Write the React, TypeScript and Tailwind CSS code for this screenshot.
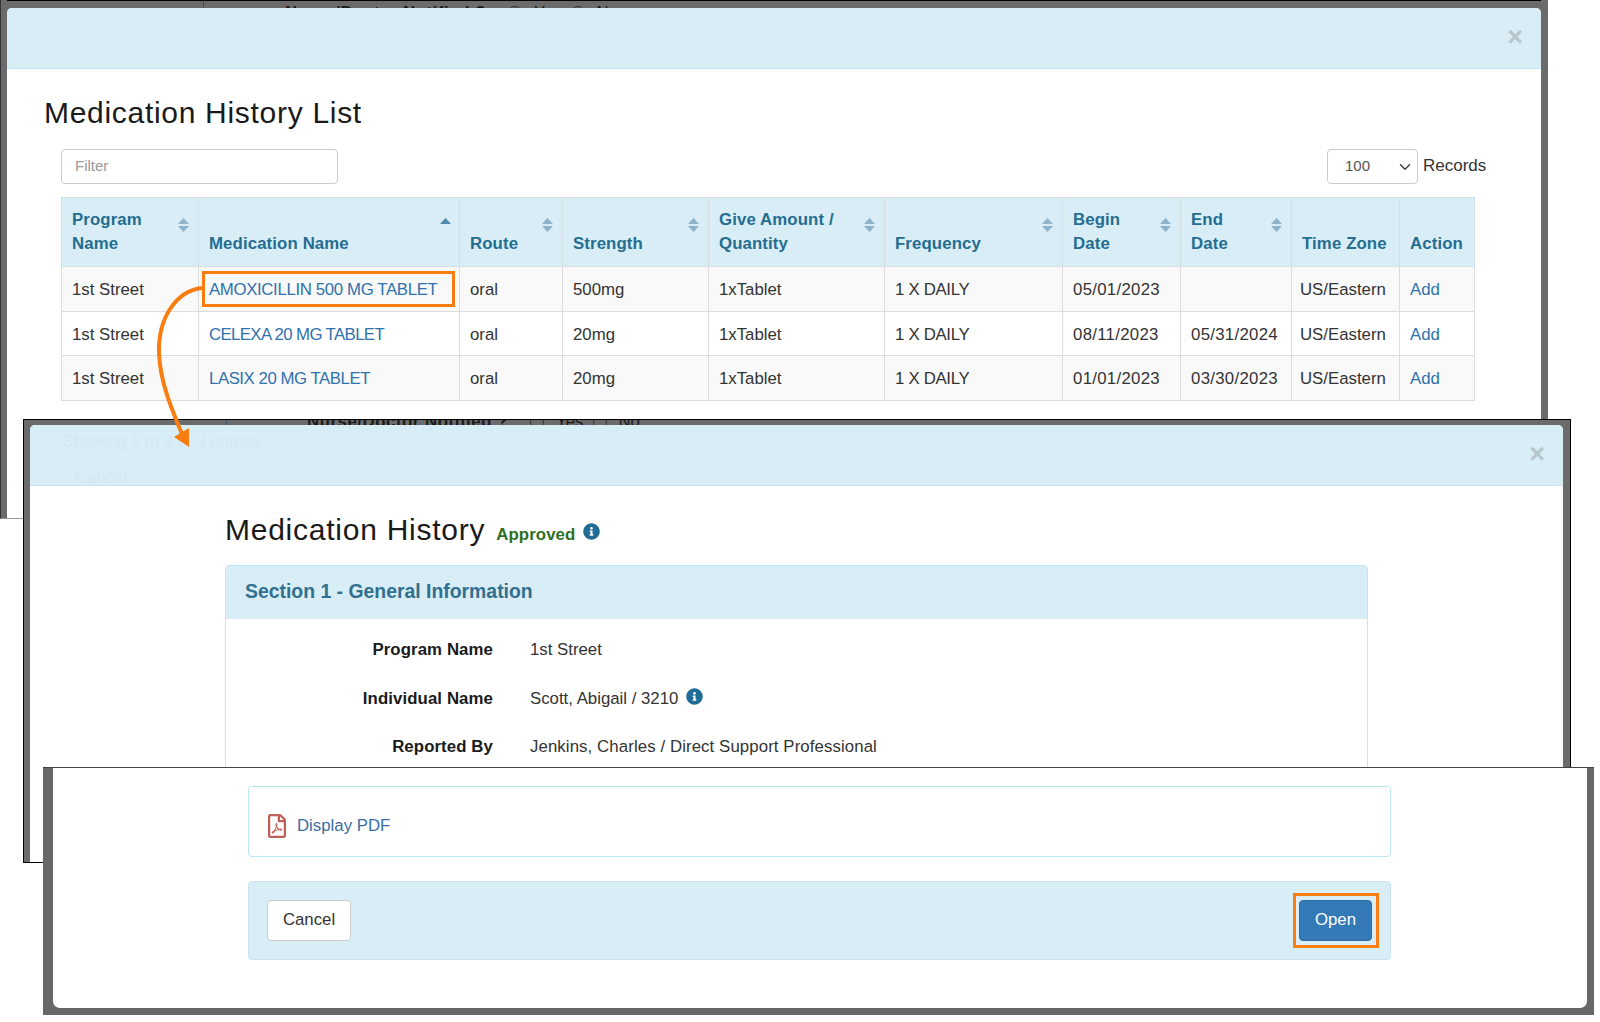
import React from 'react';
import { ChevronDown } from 'lucide-react';
import { FaInfoCircle, FaRegFilePdf } from 'react-icons/fa';

type Row = {
    program: string;
    name: string;
    nameTracking: string;
    route: string;
    strength: string;
    quantity: string;
    frequency: string;
    begin: string;
    end: string;
    zone: string;
};

const rows: Row[] = [
    { program: '1st Street', name: 'AMOXICILLIN 500 MG TABLET', nameTracking: 'tracking-[-0.35px]', route: 'oral', strength: '500mg', quantity: '1xTablet', frequency: '1 X DAILY', begin: '05/01/2023', end: '', zone: 'US/Eastern' },
    { program: '1st Street', name: 'CELEXA 20 MG TABLET', nameTracking: 'tracking-[-0.62px]', route: 'oral', strength: '20mg', quantity: '1xTablet', frequency: '1 X DAILY', begin: '08/11/2023', end: '05/31/2024', zone: 'US/Eastern' },
    { program: '1st Street', name: 'LASIX 20 MG TABLET', nameTracking: 'tracking-[-0.45px]', route: 'oral', strength: '20mg', quantity: '1xTablet', frequency: '1 X DAILY', begin: '01/01/2023', end: '03/30/2023', zone: 'US/Eastern' },
];

const columns: { label: string[]; width: string; sort: 'both' | 'up' | 'none' }[] = [
    { label: ['Program', 'Name'], width: 'w-[137px]', sort: 'both' },
    { label: ['Medication Name'], width: 'w-[261px]', sort: 'up' },
    { label: ['Route'], width: 'w-[103px]', sort: 'both' },
    { label: ['Strength'], width: 'w-[146px]', sort: 'both' },
    { label: ['Give Amount /', 'Quantity'], width: 'w-[176px]', sort: 'both' },
    { label: ['Frequency'], width: 'w-[178px]', sort: 'both' },
    { label: ['Begin', 'Date'], width: 'w-[118px]', sort: 'both' },
    { label: ['End', 'Date'], width: 'w-[111px]', sort: 'both' },
    { label: ['Time Zone'], width: 'w-[108px]', sort: 'none' },
    { label: ['Action'], width: 'w-[75px]', sort: 'none' },
];

const SortIcon: React.FC<{ kind: 'both' | 'up' }> = ({ kind }) =>
    kind === 'both' ? (
        <svg className="absolute right-[9px] top-[20px]" width="11" height="14" viewBox="0 0 11 14">
            <path d="M0 6 L5.5 0 L11 6 Z M0 8 L11 8 L5.5 14 Z" fill="#8fb4c9" />
        </svg>
    ) : (
        <svg className="absolute right-[8px] top-[20px]" width="11" height="6" viewBox="0 0 11 6">
            <path d="M0 6 L5.5 0 L11 6 Z" fill="#4f8cab" />
        </svg>
    );

const CloseButton: React.FC = () => (
    <span className="mb-[2px] text-[27px] font-bold leading-none text-[#b7c5cc]">×</span>
);

// the form behind a window, only a sliver of it shows above the modal
const BehindForm: React.FC = () => (
    <div className="flex items-center whitespace-nowrap font-bold leading-[24px] tracking-[0.55px] text-[#1a1a1a]">
        <span>Nurse/Doctor Notified ?</span>
        <span className="ml-[22px] inline-block h-[14px] w-[14px] rounded-full border border-[#333]" />
        <span className="ml-[12px] font-normal tracking-normal">Yes</span>
        <span className="ml-[10px] inline-block h-[14px] w-[14px] rounded-full border border-[#333]" />
        <span className="ml-[11px] font-normal tracking-normal">No</span>
    </div>
);

const Cell: React.FC<{ children?: React.ReactNode; className?: string }> = ({ children, className = '' }) => (
    <td className={`relative border border-[#ddd] pl-[10px] pt-[2px] align-middle ${className}`}>{children}</td>
);

export default function App() {
    return (
        <div className="relative h-[1022px] w-[1600px] overflow-hidden bg-white font-['Liberation_Sans',Arial,sans-serif] text-[16.8px] text-[#333]">
            {/* list window */}
            <div className="absolute left-0 top-0 flex h-[519px] w-[1548px] flex-col border-b border-l border-[#999] border-l-[#333] bg-[#6b6b6b] pl-[6px] pr-[7px]">
                <div className="relative h-[8px] overflow-hidden border-t border-black pl-[278px]">
                    <BehindForm />
                    <span className="absolute bottom-0 left-[196px] top-0 w-px bg-[#3f5563]" />
                </div>
                <div className="flex-1 rounded-t-[5px] bg-white">
                    <div className="flex h-[61px] items-center justify-end rounded-t-[5px] border-b border-[#bce8f1] bg-[#d9edf7] pr-[18px]">
                        <CloseButton />
                    </div>
                    <h1 className="ml-[37px] mt-[27px] text-[30px] leading-[33px] tracking-[0.7px] text-[#1a1a1a]">Medication History List</h1>
                    <div className="ml-[54px] mt-[20px] flex h-[35px] w-[1425px] items-center">
                        <input
                            placeholder="Filter"
                            className="h-[35px] w-[277px] rounded-[4px] border border-[#ccc] bg-white pb-[2px] pl-[13px] text-[15px] outline-none placeholder:text-[#999]"
                        />
                        <div className="ml-auto flex h-[35px] w-[91px] items-center justify-between rounded-[4px] border border-[#ccc] pl-[17px] pr-[3px] text-[15px] text-[#555]">
                            100
                            <ChevronDown size={18} strokeWidth={2} className="text-[#444]" />
                        </div>
                        <span className="mb-[2px] ml-[5px] w-[63px] text-[17px]">Records</span>
                    </div>
                    <table className="ml-[54px] mt-[13px] w-[1413px] table-fixed border-collapse">
                        <colgroup>
                            {columns.map((c) => (
                                <col key={c.label.join(' ')} className={c.width} />
                            ))}
                        </colgroup>
                        <thead>
                            <tr className="h-[69px] bg-[#d9edf7]">
                                {columns.map((c) => (
                                    <th
                                        key={c.label.join(' ')}
                                        className="relative border border-[#d5dfe4] pb-[10px] pl-[10px] text-left align-bottom font-bold leading-[24px] tracking-[0.12px] text-[#246d90]"
                                    >
                                        {c.label.map((line) => (
                                            <div key={line}>{line}</div>
                                        ))}
                                        {c.sort !== 'none' && <SortIcon kind={c.sort} />}
                                    </th>
                                ))}
                            </tr>
                        </thead>
                        <tbody>
                            {rows.map((r, i) => (
                                <tr key={r.name} className={i === 1 ? 'h-[44px] bg-white' : 'h-[45px] bg-[#f9f9f9]'}>
                                    <Cell>{r.program}</Cell>
                                    <Cell className="text-[#2f72ad]">
                                        <span className={r.nameTracking}>{r.name}</span>
                                        {i === 0 && <span className="absolute bottom-[4px] left-[3px] right-[4px] top-[4px] border-[3px] border-[#f97d10]" />}
                                    </Cell>
                                    <Cell>{r.route}</Cell>
                                    <Cell>{r.strength}</Cell>
                                    <Cell>{r.quantity}</Cell>
                                    <Cell className="tracking-[-0.3px]">{r.frequency}</Cell>
                                    <Cell className="tracking-[0.3px]">{r.begin}</Cell>
                                    <Cell className="tracking-[0.3px]">{r.end}</Cell>
                                    <Cell>
                                        <span className="-ml-[2px] block">{r.zone}</span>
                                    </Cell>
                                    <Cell className="text-[#2f72ad]">Add</Cell>
                                </tr>
                            ))}
                        </tbody>
                    </table>
                </div>
            </div>

            {/* detail window */}
            <div className="absolute left-[23px] top-[419px] flex h-[444px] w-[1548px] flex-col overflow-hidden border border-black bg-[#6b6b6b] pl-[6px] pr-[7px]">
                <div className="relative h-[5px] overflow-hidden pl-[277px]">
                    <div className="-mt-[10px]">
                        <BehindForm />
                    </div>
                    <span className="absolute bottom-0 left-[196px] top-0 w-px bg-[#3f5563]" />
                </div>
                <div className="flex-1 rounded-t-[5px] bg-white">
                    <div className="relative flex h-[61px] items-center justify-end rounded-t-[5px] border-b border-[#c8e4ee] bg-[#d9edf7] pr-[18px]">
                        <span className="absolute left-[32px] top-[4px] text-[#d4e8f2]">Showing 1 to 3 of 3 entries</span>
                        <span className="absolute left-[45px] top-[40px] text-[#d4e8f2]">Cancel</span>
                        <CloseButton />
                    </div>
                    <div className="ml-[195px] mt-[27px] flex h-[33px] items-baseline">
                        <h2 className="text-[30px] leading-[33px] tracking-[0.75px] text-[#1a1a1a]">Medication History</h2>
                        <span className="ml-[11px] font-bold tracking-[0.1px] text-[#2f6f1f]">Approved</span>
                        <FaInfoCircle className="ml-[8px] mt-[4px] self-center text-[#1f6d96]" size={17} />
                    </div>
                    <div className="ml-[195px] mt-[19px] w-[1143px] rounded-t-[4px] border border-[#bce8f1]">
                        <div className="flex h-[53px] items-center bg-[#d9edf7] pb-[2px] pl-[19px] text-[19.4px] font-bold text-[#31708f]">
                            Section 1 - General Information
                        </div>
                        <dl className="pt-[6.5px]">
                            <div className="flex h-[48.5px] items-center">
                                <dt className="w-[267px] text-right font-bold tracking-[0.1px] text-[#1a1a1a]">Program Name</dt>
                                <dd className="ml-[37px]">1st Street</dd>
                            </div>
                            <div className="flex h-[48.5px] items-center">
                                <dt className="w-[267px] text-right font-bold tracking-[0.1px] text-[#1a1a1a]">Individual Name</dt>
                                <dd className="ml-[37px] flex items-center">
                                    Scott, Abigail / 3210
                                    <FaInfoCircle className="mb-[4px] ml-[8px] text-[#1f6d96]" size={17} />
                                </dd>
                            </div>
                            <div className="flex h-[48.5px] items-center">
                                <dt className="w-[267px] text-right font-bold tracking-[0.1px] text-[#1a1a1a]">Reported By</dt>
                                <dd className="ml-[37px] tracking-[0.1px]">Jenkins, Charles / Direct Support Professional</dd>
                            </div>
                        </dl>
                    </div>
                </div>
            </div>

            {/* footer window */}
            <div className="absolute left-[43px] top-[767px] h-[248px] w-[1551px] border-t border-[#444] bg-[#676767] pb-[7px] pl-[10px] pr-[7px]">
                <div className="h-full rounded-b-[7px] bg-white pl-[195px] pt-[18px]">
                    <div className="flex h-[71px] w-[1143px] items-center gap-[8px] rounded-[4px] border border-[#bce8f1] pl-[16px] pt-[8px]">
                        <FaRegFilePdf className="text-[#c0605a]" size={24} />
                        <span className="text-[#3a6ea5]">Display PDF</span>
                    </div>
                    <div className="mt-[24px] flex h-[79px] w-[1143px] items-center justify-between rounded-[4px] border border-[#c8e4ee] bg-[#d9edf7] px-[18px]">
                        <button className="h-[41px] w-[84px] rounded-[4px] border border-[#ccc] bg-white pb-[1px]">Cancel</button>
                        <div className="relative">
                            <button className="h-[41px] w-[73px] rounded-[4px] border border-[#2e6da4] bg-[#337ab7] pb-[1px] text-white">Open</button>
                            <span className="absolute -bottom-[7px] -left-[6px] -right-[7px] -top-[7px] border-[3px] border-[#f97d10]" />
                        </div>
                    </div>
                </div>
            </div>

            {/* arrow from the selected row to the detail window */}
            <svg className="pointer-events-none absolute left-0 top-0" width="1600" height="1022" viewBox="0 0 1600 1022">
                <path d="M202 288 C176 291 158 318 159 353 C160 382 172 410 182 434" fill="none" stroke="#f97d10" strokeWidth="4" />
                <path d="M189 428 L174 437 L189 447 Z" fill="#f97d10" />
            </svg>
        </div>
    );
}
